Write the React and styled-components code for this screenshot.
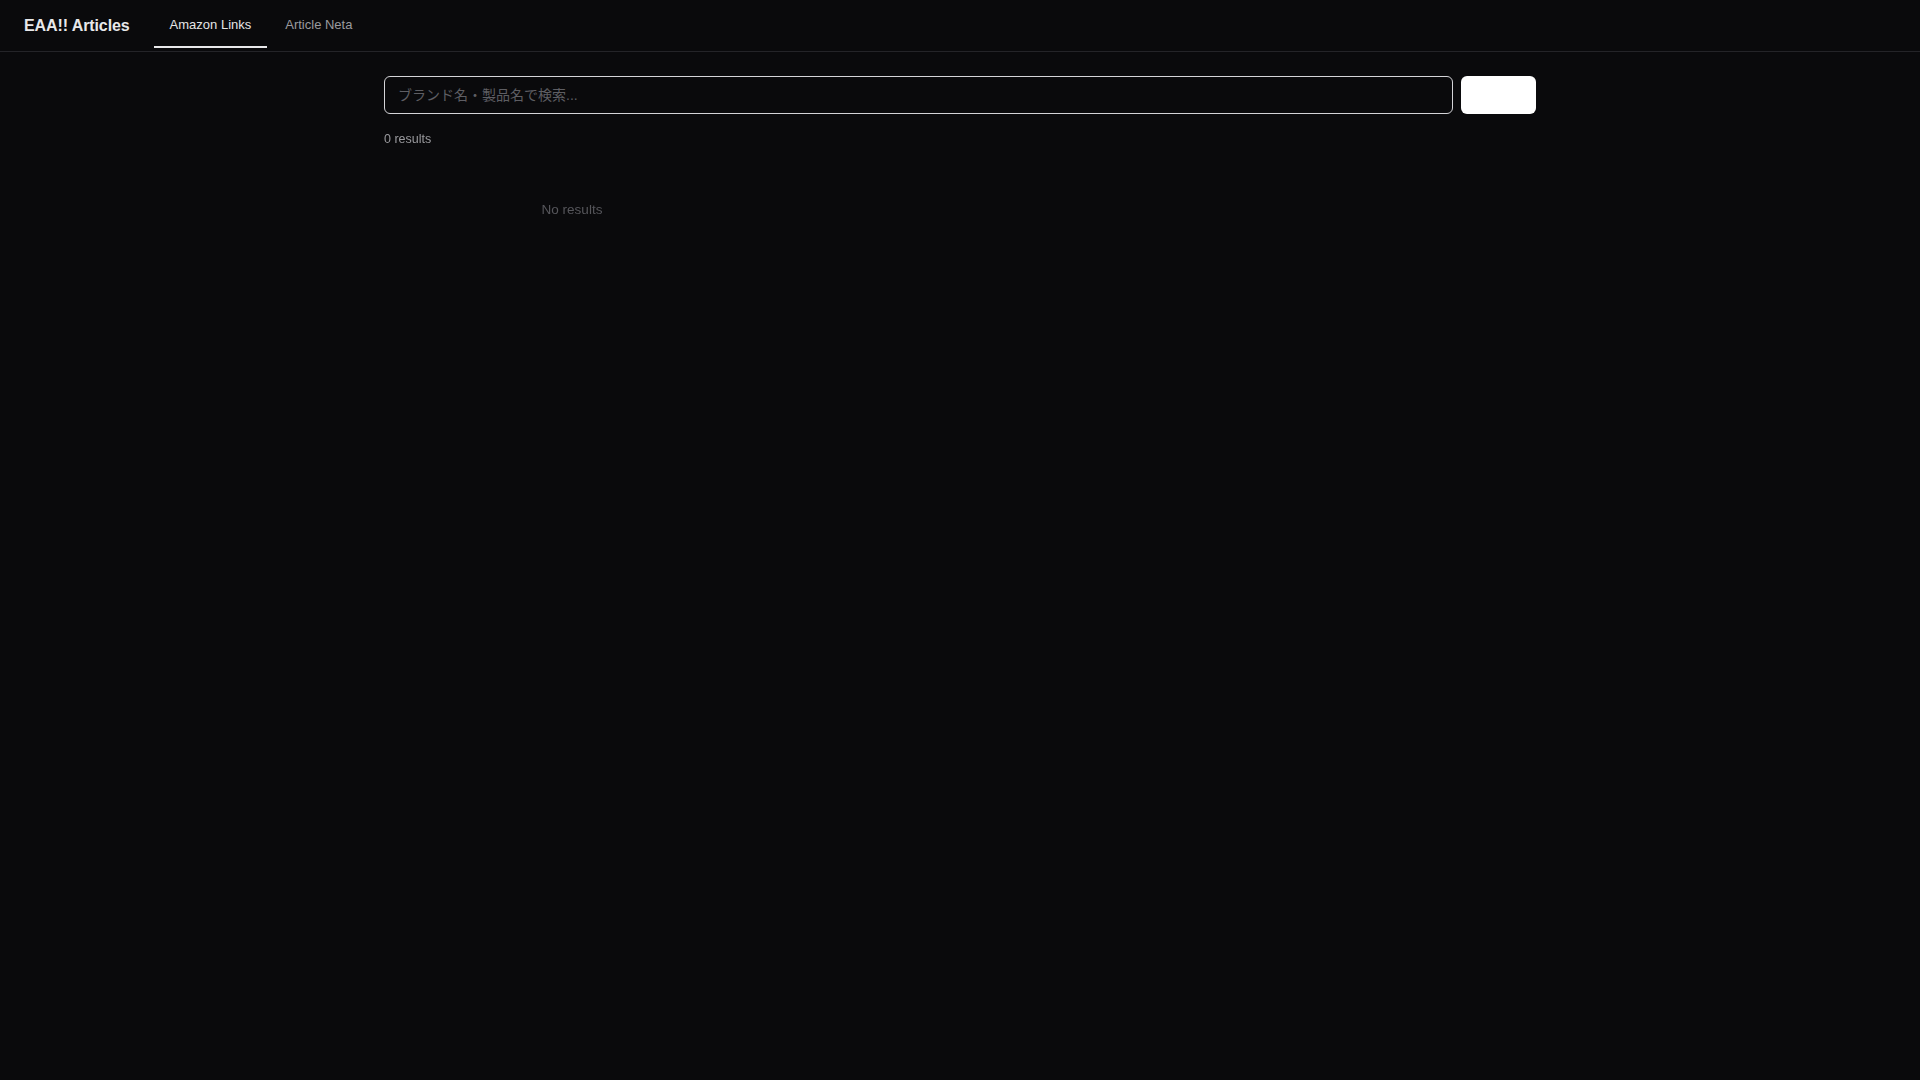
import { useState } from 'react';
import styled, { createGlobalStyle } from 'styled-components';

const tabs = ['Amazon Links', 'Article Neta'];

const App = () => {
  const [activeTab, setActiveTab] = useState(0);
  const [query, setQuery] = useState('');
  const results = [];

  return (
    <>
      <GlobalStyle />
      <Header>
        <Brand>EAA!! Articles</Brand>
        <Nav>
          {tabs.map((tab, i) => (
            <Tab key={tab} active={i === activeTab} onClick={() => setActiveTab(i)}>
              {tab}
            </Tab>
          ))}
        </Nav>
      </Header>

      <Main>
        <SearchRow>
          <SearchInput
            autoFocus
            type="text"
            placeholder="ブランド名・製品名で検索..."
            value={query}
            onChange={(e) => setQuery(e.target.value)}
          />
          <SearchButton type="button" aria-label="search" />
        </SearchRow>

        <ResultCount>{results.length} results</ResultCount>

        <ResultGrid>
          {results.length === 0 && <Empty>No results</Empty>}
        </ResultGrid>
      </Main>
    </>
  );
};

const GlobalStyle = createGlobalStyle`
  html, body {
    margin: 0;
    min-height: 100%;
    background: #0a0a0c;
  }
  body {
    font-family: "Liberation Sans", Arial, "Noto Sans CJK JP", sans-serif;
    color: #e5e5e5;
    min-height: 100vh;
  }
  * {
    box-sizing: border-box;
  }
`;

const Header = styled.header`
  display: flex;
  align-items: center;
  gap: 24px;
  height: 52px;
  padding: 0 24px;
  border-bottom: 1px solid #242428;
`;

const Brand = styled.div`
  font-size: 16px;
  font-weight: 700;
  letter-spacing: -0.1px;
  color: #e8e8ea;
  margin-top: 1px;
`;

const Nav = styled.nav`
  display: flex;
  align-self: stretch;
  gap: 2px;
  padding-bottom: 3px;
`;

const Tab = styled.button`
  display: flex;
  align-items: center;
  height: 100%;
  padding: 0 16px;
  background: none;
  border: none;
  border-bottom: 2px solid ${(props) => (props.active ? '#e8e8ea' : 'transparent')};
  border-top: 2px solid transparent;
  font-family: inherit;
  font-size: 13px;
  color: ${(props) => (props.active ? '#e5e5e5' : '#9a9a9e')};
  cursor: pointer;
`;

const Main = styled.main`
  max-width: 1152px;
  margin: 0 auto;
  padding-top: 24px;
`;

const SearchRow = styled.div`
  display: flex;
  gap: 8px;
`;

const SearchInput = styled.input`
  flex: 1;
  height: 38px;
  padding: 0 13px;
  background: #0a0a0c;
  border: 1px solid #d4d4d8;
  border-radius: 6px;
  color: #e5e5e5;
  font-family: "Liberation Sans", Arial, "Noto Sans CJK JP", sans-serif;
  font-size: 14px;
  outline: none;
  caret-color: #e5e5e5;

  &::placeholder {
    color: #5e5e63;
  }
`;

const SearchButton = styled.button`
  width: 75px;
  height: 38px;
  background: #ffffff;
  border: none;
  border-radius: 6px;
  cursor: pointer;
`;

const ResultCount = styled.div`
  margin-top: 16px;
  font-size: 12.5px;
  line-height: 18px;
  color: #9a9a9e;
`;

const ResultGrid = styled.div`
  display: grid;
  grid-template-columns: repeat(3, 1fr);
  gap: 12px;
  margin-top: 16px;
`;

const Empty = styled.div`
  padding: 37px 0;
  text-align: center;
  font-size: 13.5px;
  line-height: 18px;
  color: #56565b;
`;

export default App;
